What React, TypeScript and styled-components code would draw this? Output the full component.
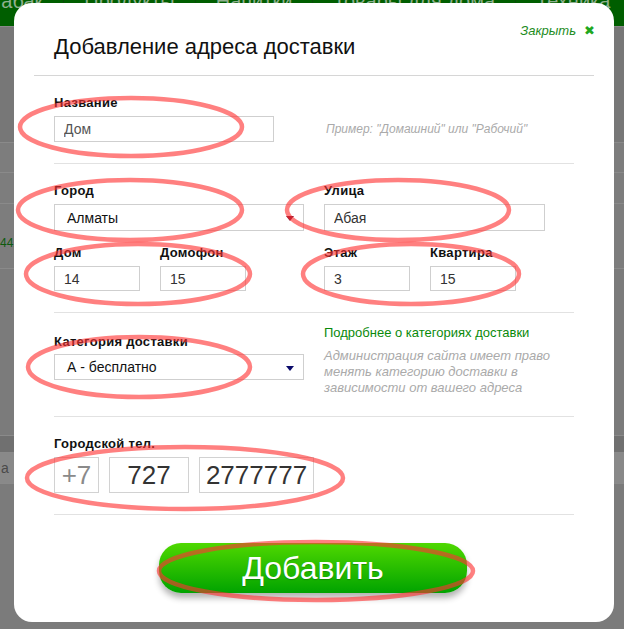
import styled, { createGlobalStyle } from 'styled-components';

const GlobalStyle = createGlobalStyle`
  html, body {
    margin: 0;
    padding: 0;
  }
  body {
    font-family: "Liberation Sans", Arial, sans-serif;
    background: #7b7b7b;
  }
`;

const navItems = ['Табак', 'Продукты', 'Напитки', 'Товары для дома', 'Техника'];

// red marker ellipses drawn over the screenshot
const marks = [
  { cx: 131, cy: 127, rx: 111, ry: 29 },
  { cx: 130, cy: 210, rx: 112, ry: 30 },
  { cx: 398, cy: 210, rx: 111, ry: 30 },
  { cx: 138, cy: 274, rx: 112, ry: 30 },
  { cx: 411, cy: 274, rx: 108, ry: 30 },
  { cx: 139, cy: 367, rx: 111, ry: 30 },
  { cx: 185, cy: 478, rx: 158, ry: 31 },
  { cx: 316, cy: 571, rx: 157, ry: 29 },
];

const App = () => {
  return (
    <Page>
      <GlobalStyle />

      <Site>
        <NavBar>
          {navItems.map((item) => (
            <NavItem key={item}>{item}</NavItem>
          ))}
        </NavBar>
        <BgRow $h={116} $bg="#777777" />
        <BgRow $h={30} $bg="#7d7d7d" />
        <BgRow $h={31} $bg="#7d7d7d" />
        <BgRow $h={65} $bg="#7d7d7d">
          <BgPhone>441</BgPhone>
        </BgRow>
        <BgRow $h={167} $bg="#7b7b7b" />
        <BgRow $h={17} $bg="#707070" />
        <BgRow $h={31} $bg="#898989">
          <BgText>а</BgText>
        </BgRow>
        <BgRow $h={146} $bg="#7b7b7b" />
      </Site>

      <ModalLayer>
        <Dialog>
          <DialogHeader>
            <Title>Добавление адреса доставки</Title>
            <CloseLink>
              Закрыть <CloseX>✖</CloseX>
            </CloseLink>
          </DialogHeader>
          <TopRule />

          <Section $top={19} $bottom={21}>
            <TwoCols>
              <Field>
                <Label>Название</Label>
                <TextInput $w={220} $h={26} readOnly value="Дом" $muted />
              </Field>
              <Hint>Пример: "Домашний" или "Рабочий"</Hint>
            </TwoCols>
          </Section>

          <Section $top={19} $bottom={21}>
            <TwoCols $rowGap={14}>
              <Field>
                <Label>Город</Label>
                <SelectBox $h={27}>
                  <span>Алматы</span>
                  <Arrow $color="#7a0a2a" />
                </SelectBox>
              </Field>
              <Field>
                <Label>Улица</Label>
                <TextInput $w={221} $h={27} readOnly value="Абая" />
              </Field>
              <Pair>
                <Field>
                  <Label>Дом</Label>
                  <TextInput $w={86} $h={25} readOnly value="14" />
                </Field>
                <Field>
                  <Label>Домофон</Label>
                  <TextInput $w={86} $h={25} readOnly value="15" />
                </Field>
              </Pair>
              <Pair>
                <Field>
                  <Label>Этаж</Label>
                  <TextInput $w={86} $h={25} readOnly value="3" />
                </Field>
                <Field>
                  <Label>Квартира</Label>
                  <TextInput $w={86} $h={25} readOnly value="15" />
                </Field>
              </Pair>
            </TwoCols>
          </Section>

          <Section $top={0} $bottom={20}>
            <TwoCols>
              <Field $pad={21}>
                <Label $gap={4}>Категория доставки</Label>
                <SelectBox $h={26}>
                  <span>А - бесплатно</span>
                  <Arrow $color="#0a0a6a" />
                </SelectBox>
              </Field>
              <InfoCol>
                <InfoLink>Подробнее о категориях доставки</InfoLink>
                <InfoText>
                  Администрация сайта имеет право менять категорию доставки в
                  зависимости от вашего адреса
                </InfoText>
              </InfoCol>
            </TwoCols>
          </Section>

          <Section $top={19} $bottom={21}>
            <Field>
              <Label>Городской тел.</Label>
              <PhoneRow>
                <PhoneInput $w={45} readOnly value="+7" $muted />
                <PhoneInput $w={80} readOnly value="727" />
                <PhoneInput $w={115} readOnly value="2777777" />
              </PhoneRow>
            </Field>
          </Section>

          <Footer>
            <AddButton type="button">Добавить</AddButton>
          </Footer>
        </Dialog>
      </ModalLayer>

      <Marks width="624" height="629" viewBox="0 0 624 629">
        {marks.map((m, i) => (
          <ellipse
            key={i}
            cx={m.cx}
            cy={m.cy}
            rx={m.rx}
            ry={m.ry}
            fill="none"
            stroke="rgba(255, 50, 50, 0.62)"
            strokeWidth={4.5}
          />
        ))}
      </Marks>
    </Page>
  );
};

const Page = styled.div`
  position: relative;
  width: 624px;
  height: 629px;
  overflow: hidden;
  background: #7b7b7b;
`;

const Site = styled.div`
  display: flex;
  flex-direction: column;
`;

const NavBar = styled.div`
  display: flex;
  align-items: flex-start;
  height: 26px;
  margin-left: -30px;
  background: #005e00;
  overflow: hidden;
`;

const NavItem = styled.div`
  margin-top: -9px;
  padding: 0 20px;
  border-right: 1px solid #0a4a0a;
  font-size: 20px;
  line-height: 20px;
  color: #8fb08f;
  white-space: nowrap;
`;

const BgRow = styled.div<{ $h: number; $bg: string }>`
  height: ${(p) => p.$h - 1}px;
  background: ${(p) => p.$bg};
  border-top: 1px solid #8a8a8a;
  position: relative;
`;

const BgPhone = styled.div`
  padding-top: 32px;
  font-size: 12px;
  color: #0e5a0e;
`;

const BgText = styled.div`
  padding: 7px 0 0 1px;
  font-size: 14px;
  color: #4a4a4a;
`;

const ModalLayer = styled.div`
  position: absolute;
  top: 0;
  left: 0;
  padding: 3px 0 0 14px;
`;

const Dialog = styled.div`
  width: 600px;
  height: 619px;
  background: #ffffff;
  border-radius: 18px;
  display: flex;
  flex-direction: column;
`;

const DialogHeader = styled.div`
  display: flex;
  justify-content: space-between;
  align-items: flex-start;
  padding: 20px 19px 16px 40px;
`;

const Title = styled.h1`
  margin: 12px 0 0;
  font-size: 22px;
  line-height: 24px;
  font-weight: normal;
  color: #111111;
`;

const CloseLink = styled.div`
  display: flex;
  align-items: center;
  gap: 8px;
  margin-top: 1px;
  font-size: 13px;
  line-height: 14px;
  font-style: italic;
  color: #1d8c1d;
`;

const CloseX = styled.span`
  font-style: normal;
  font-size: 13px;
  color: #1fa81f;
`;

const TopRule = styled.div`
  height: 1px;
  margin: 0 20px;
  background: #d6d6d6;
`;

const Section = styled.div<{ $top: number; $bottom: number }>`
  margin: 0 40px;
  padding: ${(p) => p.$top}px 0 ${(p) => p.$bottom}px;
  border-bottom: 1px solid #e2e2e2;
`;

const TwoCols = styled.div<{ $rowGap?: number }>`
  display: grid;
  grid-template-columns: 250px 1fr;
  column-gap: 20px;
  row-gap: ${(p) => p.$rowGap ?? 0}px;
`;

const Pair = styled.div`
  display: flex;
  gap: 20px;
`;

const Field = styled.div<{ $pad?: number }>`
  display: flex;
  flex-direction: column;
  padding-top: ${(p) => p.$pad ?? 0}px;
`;

const Label = styled.div<{ $gap?: number }>`
  margin-bottom: ${(p) => p.$gap ?? 5}px;
  font-size: 13px;
  line-height: 16px;
  font-weight: bold;
  letter-spacing: 0.3px;
  color: #111111;
`;

const TextInput = styled.input<{ $w: number; $h: number; $muted?: boolean }>`
  box-sizing: border-box;
  width: ${(p) => p.$w}px;
  height: ${(p) => p.$h}px;
  padding: 0 9px;
  border: 1px solid #cfcfcf;
  border-radius: 0;
  outline: none;
  font-family: "Liberation Sans", Arial, sans-serif;
  font-size: 14px;
  color: ${(p) => (p.$muted ? '#555555' : '#333333')};
  background: #ffffff;
`;

const SelectBox = styled.div<{ $h: number }>`
  box-sizing: border-box;
  width: 250px;
  height: ${(p) => p.$h}px;
  display: flex;
  align-items: center;
  justify-content: space-between;
  padding: 0 9px 0 12px;
  border: 1px solid #cfcfcf;
  font-size: 14px;
  color: #111111;
`;

const Arrow = styled.span<{ $color: string }>`
  width: 0;
  height: 0;
  border-left: 4px solid transparent;
  border-right: 4px solid transparent;
  border-top: 5px solid ${(p) => p.$color};
  margin-top: 2px;
`;

const Hint = styled.div`
  align-self: end;
  padding-left: 2px;
  font-size: 12px;
  line-height: 26px;
  font-style: italic;
  color: #aaaaaa;
`;

const InfoCol = styled.div`
  padding-top: 12px;
  display: flex;
  flex-direction: column;
  gap: 7px;
`;

const InfoLink = styled.div`
  font-size: 13px;
  line-height: 16px;
  color: #0a8a0a;
`;

const InfoText = styled.div`
  width: 232px;
  font-size: 13px;
  line-height: 16px;
  font-style: italic;
  color: #aaaaaa;
`;

const PhoneRow = styled.div`
  display: flex;
  gap: 10px;
`;

const PhoneInput = styled.input<{ $w: number; $muted?: boolean }>`
  box-sizing: border-box;
  width: ${(p) => p.$w}px;
  height: 36px;
  padding: 0;
  border: 1px solid #d2d2d2;
  border-radius: 0;
  outline: none;
  text-align: center;
  font-family: "Liberation Sans", Arial, sans-serif;
  font-size: 26px;
  color: ${(p) => (p.$muted ? '#8a8a8a' : '#333333')};
  background: #ffffff;
`;

const Footer = styled.div`
  display: flex;
  justify-content: center;
  padding: 28px 0;
`;

const AddButton = styled.button`
  width: 308px;
  height: 50px;
  margin-left: -2px;
  border: none;
  border-radius: 22px;
  background: linear-gradient(180deg, #4fd800 0%, #2cc000 45%, #00a300 100%);
  box-shadow: 0 5px 6px rgba(0, 0, 0, 0.3);
  font-family: "Liberation Sans", Arial, sans-serif;
  font-size: 32px;
  color: #ffffff;
  text-shadow: 0 1px 1px rgba(0, 80, 0, 0.4);
  cursor: pointer;
`;

const Marks = styled.svg`
  position: absolute;
  top: 0;
  left: 0;
  pointer-events: none;
`;

export default App;
